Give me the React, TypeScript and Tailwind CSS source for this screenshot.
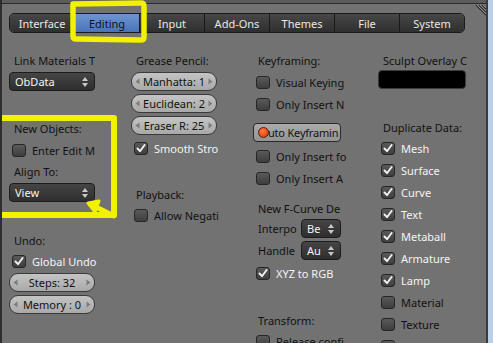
import React from "react";

const font = "font-['Noto_Sans','DejaVu_Sans',sans-serif]";

function Label({ text }: { text: string }) {
  return (
    <div className="h-[20px] flex items-center pl-[5px] text-[#111] whitespace-nowrap">
      {text}
    </div>
  );
}

function Check({ text, on, mt = "" }: { text: string; on?: boolean; mt?: string }) {
  return (
    <div className={`h-[22px] flex items-center pl-[3px] whitespace-nowrap ${mt}`}>
      <div className="w-[14px] h-[13px] rounded-[3px] border border-[#262626] bg-gradient-to-b from-[#5a5a5a] to-[#3e3e3e] flex items-center justify-center shrink-0">
        {on && (
          <svg width="10" height="9" viewBox="0 0 10 9">
            <path d="M1.5 4.5 L4 7.2 L8.6 1" fill="none" stroke="#f2f2f2" strokeWidth="1.9" strokeLinecap="round" strokeLinejoin="round" />
          </svg>
        )}
      </div>
      <span className={`ml-[6px] ${on ? "text-[#f4f4f4]" : "text-[#111]"}`}>{text}</span>
    </div>
  );
}

function Arrows() {
  return (
    <svg width="8" height="12" viewBox="0 0 8 12" className="shrink-0">
      <path d="M4 1 L7 5 L1 5 Z" fill="#c8c8c8" />
      <path d="M4 11 L7 7 L1 7 Z" fill="#c8c8c8" />
    </svg>
  );
}

function Menu({ text, w = "w-full", mt = "" }: { text: string; w?: string; mt?: string }) {
  return (
    <div className={`h-[19px] ${w} ${mt} rounded-[4px] border border-[#1c1c1c] bg-gradient-to-b from-[#454545] to-[#2e2e2e] flex items-center justify-between pl-[5px] pr-[5px] text-[#f4f4f4]`}>
      <span>{text}</span>
      <Arrows />
    </div>
  );
}

function Num({ text, mt = "" }: { text: string; mt?: string }) {
  return (
    <div className={`h-[19px] w-full ${mt} rounded-[9px] border border-[#3a3a3a] bg-gradient-to-b from-[#c4c4c4] to-[#a9a9a9] flex items-center justify-between px-[3px] text-[#111]`}>
      <svg width="5" height="7" viewBox="0 0 5 7"><path d="M4.5 0.5 L0.5 3.5 L4.5 6.5 Z" fill="#7c7c7c" /></svg>
      <span className="whitespace-nowrap">{text}</span>
      <svg width="5" height="7" viewBox="0 0 5 7"><path d="M0.5 0.5 L4.5 3.5 L0.5 6.5 Z" fill="#7c7c7c" /></svg>
    </div>
  );
}

const tabs = ["Interface", "Editing", "Input", "Add-Ons", "Themes", "File", "System"];

export default function App() {
  return (
    <div className={`relative w-[493px] h-[343px] overflow-hidden bg-[#727272] text-[11px] leading-none ${font}`}>
      <div className="flex h-full">
        <div className="flex-1 border-l-2 border-[#2e2e2e] relative">
          <div className="h-[4px] bg-[#5c5c5c] border-b border-[#2c2c2c]" />

          {/* tabs */}
          <div className="ml-[7px] mt-[9px] flex w-[456px] h-[20px] rounded-[5px] border border-[#1a1a1a] overflow-hidden">
            {tabs.map((t, i) => (
              <div
                key={t}
                className={`flex-1 flex items-center justify-center ${i > 0 ? "border-l border-[#1a1a1a]" : ""} ${
                  t === "Editing"
                    ? "bg-gradient-to-b from-[#6e95d2] to-[#4a74b8] text-[#111]"
                    : "bg-gradient-to-b from-[#474747] to-[#2f2f2f] text-[#e8e8e8]"
                }`}
              >
                {t}
              </div>
            ))}
          </div>

          {/* columns */}
          <div className="flex mt-[17px] ml-[7px]">
            {/* col 1 */}
            <div className="w-[86px] flex flex-col">
              <Label text="Link Materials T" />
              <Menu text="ObData" mt="mt-[2px]" />
              <div className="mt-[27px]"><Label text="New Objects:" /></div>
              <Check text="Enter Edit M" mt="mt-[1px]" />
              <Label text="Align To:" />
              <Menu text="View" mt="mt-[2px]" />
              <div className="mt-[28px]"><Label text="Undo:" /></div>
              <Check text="Global Undo" on />
              <Num text="Steps: 32" mt="mt-[1px]" />
              <Num text="Memory : 0" mt="mt-[3px]" />
            </div>

            {/* col 2 */}
            <div className="w-[86px] ml-[36px] flex flex-col">
              <Label text="Grease Pencil:" />
              <Num text="Manhatta: 1" mt="mt-[2px]" />
              <Num text="Euclidean: 2" mt="mt-[3px]" />
              <Num text="Eraser R: 25" mt="mt-[3px]" />
              <Check text="Smooth Stro" on mt="mt-[2px]" />
              <div className="mt-[25px]"><Label text="Playback:" /></div>
              <Check text="Allow Negati" />
            </div>

            {/* col 3 */}
            <div className="w-[88px] ml-[36px] flex flex-col">
              <Label text="Keyframing:" />
              <Check text="Visual Keying" mt="mt-[1px]" />
              <Check text="Only Insert N" />
              <div className="mt-[8px] h-[19px] w-full rounded-[4px] border border-[#2a2a2a] bg-gradient-to-b from-[#ababab] to-[#939393] flex items-center whitespace-nowrap text-[#111]">
                <div className="ml-[4px] w-[11px] h-[11px] rounded-full bg-[radial-gradient(circle_at_40%_35%,#ff7a3a,#d8330c)] border border-[#5a1a08] shrink-0" />
                <span className="ml-[-1px] tracking-[-0.2px]">uto Keyframin</span>
              </div>
              <Check text="Only Insert fo" mt="mt-[3px]" />
              <Check text="Only Insert A" />
              <div className="mt-[9px]"><Label text="New F-Curve De" /></div>
              <div className="mt-[1px] h-[19px] flex items-center justify-between">
                <span className="pl-[5px] text-[#111]">Interpo</span>
                <Menu text="Be" w="w-[40px]" />
              </div>
              <div className="mt-[3px] h-[19px] flex items-center justify-between">
                <span className="pl-[5px] text-[#111]">Handle</span>
                <Menu text="Au" w="w-[40px]" />
              </div>
              <Check text="XYZ to RGB" on mt="mt-[2px]" />
              <div className="mt-[26px]"><Label text="Transform:" /></div>
              <Check text="Release confi" />
            </div>

            {/* col 4 */}
            <div className="w-[88px] ml-[37px] flex flex-col">
              <Label text="Sculpt Overlay C" />
              <div className="h-[19px] w-full rounded-[4px] border border-[#3c3c3c] bg-black" />
              <div className="mt-[28px]"><Label text="Duplicate Data:" /></div>
              <Check text="Mesh" on />
              <Check text="Surface" on />
              <Check text="Curve" on />
              <Check text="Text" on />
              <Check text="Metaball" on />
              <Check text="Armature" on />
              <Check text="Lamp" on />
              <Check text="Material" />
              <Check text="Texture" />
              <Check text="Action" />
            </div>
          </div>

          {/* region corner widget */}
          <svg className="absolute right-[0px] top-[5px]" width="11" height="11" viewBox="0 0 11 11">
            <path d="M1 0 L11 10 M4 0 L11 7 M7 0 L11 4" stroke="#2a2a2a" strokeWidth="1.2" />
            <path d="M2 0 L11 9 M5 0 L11 6 M8 0 L11 3" stroke="#9a9a9a" strokeWidth="0.8" />
          </svg>
        </div>
        <div className="w-[2px] bg-[#3c3c3c]" />
        <div className="w-[5px] bg-[#bccfe6]" />
      </div>

      {/* yellow annotations */}
      <svg className="absolute inset-0 pointer-events-none" width="493" height="343" viewBox="0 0 493 343">
        <path d="M73 4 L141 3 Q144 3 144 6 L144 37 Q144 40 141 40 L76 39 Q73 39 73 36 Z" fill="none" stroke="#f2f200" strokeWidth="5.5" strokeLinejoin="round" />
        <path d="M2 118 L114 118 L114 215 L2 215" fill="none" stroke="#f2f200" strokeWidth="6" strokeLinejoin="round" />
        <path d="M114 216 L92 205" stroke="#f2f200" strokeWidth="5" strokeLinecap="round" />
        <path d="M88 203 L99 201 L95 212 Z" fill="#f2f200" stroke="#f2f200" strokeWidth="3" strokeLinejoin="round" />
      </svg>
    </div>
  );
}
